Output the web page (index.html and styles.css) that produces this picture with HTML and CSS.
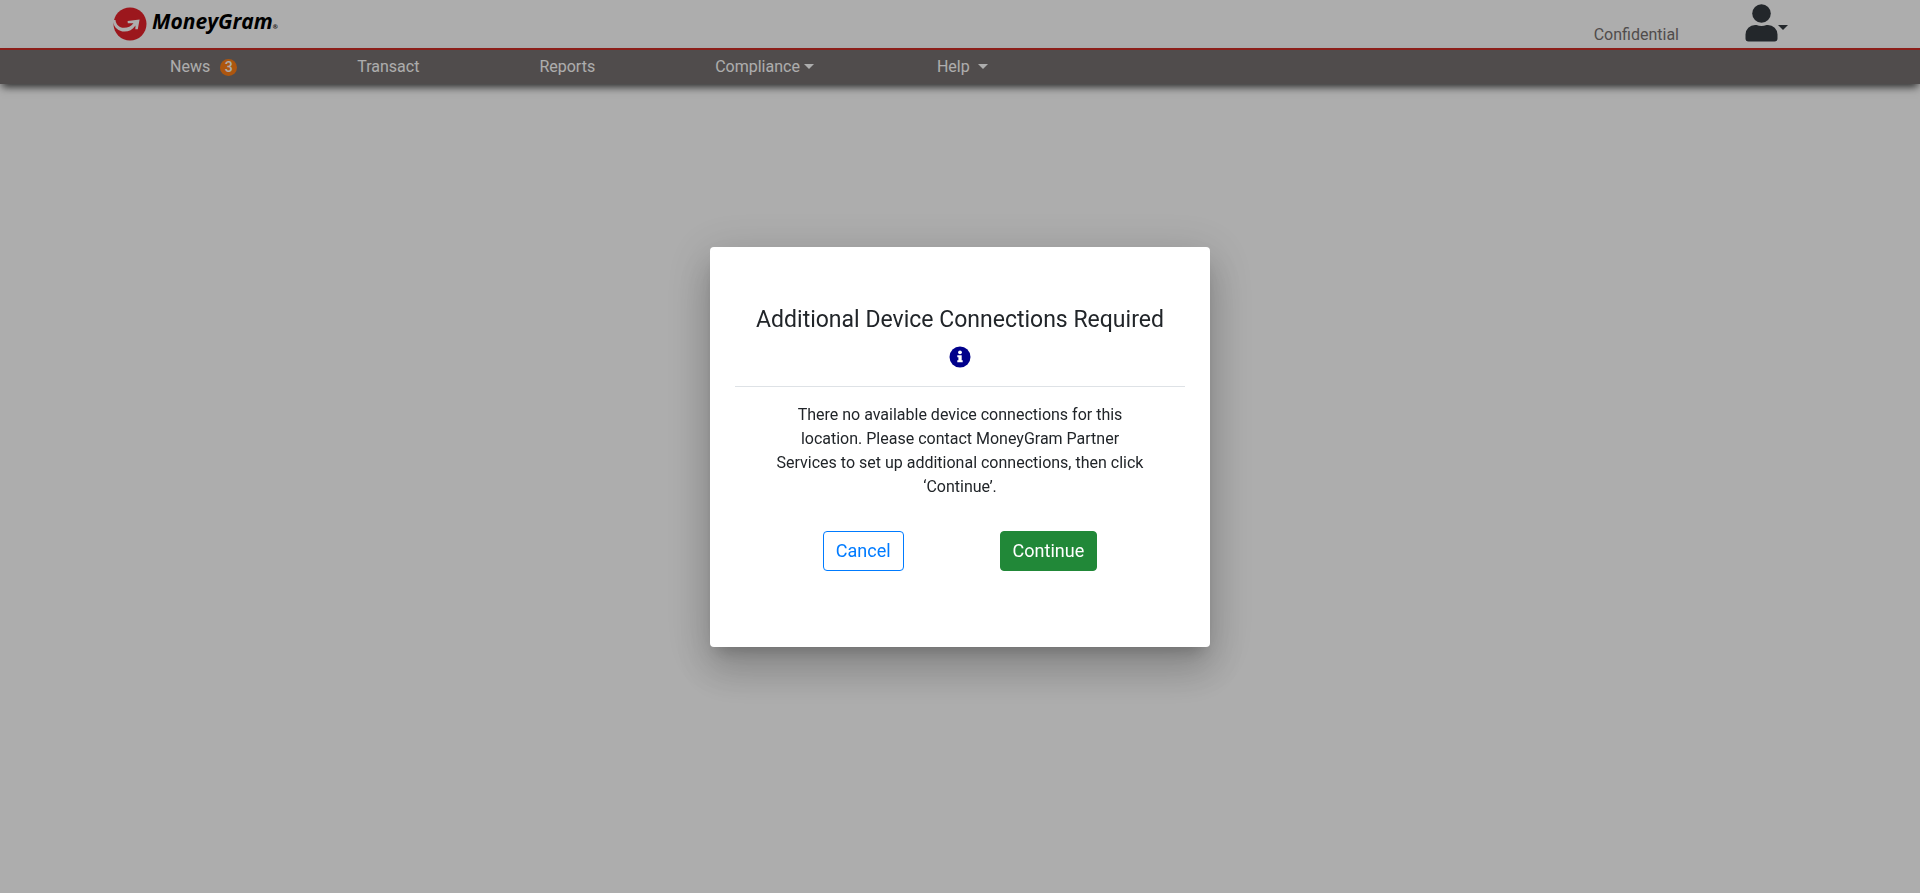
FILE: index.html
```html
<!DOCTYPE html>
<html lang="en">
<head>
<meta charset="utf-8">
<title>MoneyGram</title>
<link rel="stylesheet" href="styles.css">
</head>
<body>
<header class="page-header">
  <div class="topbar">
    <a class="brand" href="#">
      <svg class="brand-mark" viewBox="0 0 34 34" aria-hidden="true">
        <circle cx="17" cy="17" r="16.500" fill="#e6222b"/>
        <path d="M0 13 L2.500 13 C3 17.500 6 20.800 11 20.800 C15 20.800 18 19.500 20.500 16.200 L14.800 16.200 L14.600 13.900 L26.600 12.500 L24.800 22.300 L22.300 22.300 L22.500 18.400 C19.500 22.600 16 24.600 11.500 24.600 C5.500 24.600 1 20.500 0 15 Z" fill="#fff"/>
      </svg>
      <span class="brand-name">MoneyGram<span class="brand-reg">®</span></span>
    </a>
    <div class="account">
      <span class="confidential">Confidential</span>
      <button class="user-menu" type="button" aria-label="Account">
        <svg class="user-icon" viewBox="0 0 32 38" aria-hidden="true">
          <circle cx="16" cy="9.500" r="9.300"/>
          <path d="M9.600 21 H11 Q16 23 21 21 H22.400 A9.600 9.600 0 0 1 32 30.600 V34.500 A3 3 0 0 1 29 37.500 H3 A3 3 0 0 1 0 34.500 V30.600 A9.600 9.600 0 0 1 9.600 21 Z"/>
        </svg>
        <span class="caret"></span>
      </button>
    </div>
  </div>
  <nav class="main-nav">
    <a class="nav-link nav-link-news" href="#">News <span class="badge">3</span></a>
    <a class="nav-link" href="#">Transact</a>
    <a class="nav-link" href="#">Reports</a>
    <button class="nav-link nav-link-tight" type="button">Compliance<span class="caret"></span></button>
    <button class="nav-link" type="button">Help<span class="caret"></span></button>
  </nav>
</header>
<div class="backdrop">
  <div class="dialog" role="dialog" aria-modal="true" aria-labelledby="dialog-title">
    <div class="dialog-head">
      <h1 class="dialog-title" id="dialog-title">Additional Device Connections Required</h1>
      <svg class="info-icon" viewBox="0 0 22 22" role="img" aria-label="Information">
        <circle cx="11" cy="11" r="10.500" fill="#00008b"/>
        <circle cx="11" cy="6.300" r="1.900" fill="#fff"/>
        <path d="M8.300 9.200 H12.700 V14.200 H13.700 V16.300 H8.300 V14.200 H9.400 V11.300 H8.300 Z" fill="#fff"/>
      </svg>
    </div>
    <p class="dialog-text">There no available device connections for this location. Please contact MoneyGram Partner Services to set up additional connections, then click ‘Continue’.</p>
    <div class="dialog-actions">
      <button class="btn btn-cancel" type="button">Cancel</button>
      <button class="btn btn-continue" type="button">Continue</button>
    </div>
  </div>
</div>
</body>
</html>
```
FILE: styles.css
```css
* { box-sizing: border-box; }

body {
  min-height: 100vh;
  margin: 0;
  background: #fff;
  color: #212529;
  font-family: Roboto, "Liberation Sans", sans-serif;
  font-size: 16px;
  line-height: 24px;
}

button { font: inherit; cursor: pointer; }

.topbar {
  display: flex;
  justify-content: space-between;
  height: 50px;
  padding: 0 132px 0 113px;
  border-bottom: 2px solid #d12d26;
}

.brand {
  display: flex;
  align-items: center;
  gap: 5px;
  color: #000;
  text-decoration: none;
}
.brand-mark { width: 34px; height: 34px; }
.brand-name {
  font-family: "Open Sans", sans-serif;
  font-size: 21px;
  font-weight: 700;
  font-style: italic;
}
.brand-reg { font-size: 6px; }

.account { display: flex; gap: 66px; }
.confidential { align-self: flex-end; color: #777170; line-height: 26px; }
.user-menu {
  display: flex;
  align-items: center;
  padding: 0 0 2px;
  border: 0;
  background: none;
  color: #343a40;
}
.user-icon { width: 33px; height: 38px; fill: currentColor; }

.caret {
  border: 5px solid transparent;
  border-top-color: currentColor;
  border-bottom: 0;
}
.user-menu .caret { margin-top: 8px; }

.main-nav {
  display: flex;
  gap: 120px;
  height: 34px;
  padding-left: 170px;
  background: #777170;
  box-shadow: 0 5px 8px -2px #444;
}
.nav-link {
  display: flex;
  align-items: center;
  gap: 8px;
  padding: 0;
  border: 0;
  background: none;
  color: #fff;
  text-decoration: none;
}
.nav-link-news { gap: 10px; }
.nav-link-tight { gap: 4px; padding-right: 3px; }
.nav-link .caret { margin-bottom: 1px; }
.badge {
  width: 17px;
  border-radius: 9px;
  background: #ff7f17;
  font-size: 14px;
  font-weight: 500;
  line-height: 17px;
  text-align: center;
}

.backdrop {
  position: fixed;
  inset: 0;
  display: flex;
  align-items: center;
  justify-content: center;
  padding-top: 1px;
  background: rgba(0, 0, 0, .32);
}
.dialog {
  width: 500px;
  padding: 57px 25px 76px;
  border-radius: 4px;
  background: #fff;
  text-align: center;
  box-shadow: 0 11px 15px -7px rgba(0, 0, 0, .2), 0 24px 38px 3px rgba(0, 0, 0, .14), 0 9px 46px 8px rgba(0, 0, 0, .12);
}
.dialog-head {
  display: flex;
  flex-direction: column;
  align-items: center;
  gap: 10px;
  padding-bottom: 18px;
  border-bottom: 1px solid #dee2e6;
}
.dialog-title {
  margin: 0;
  font-size: 23px;
  font-weight: 400;
  line-height: 32px;
}
.info-icon { width: 22px; height: 22px; }
.dialog-text { margin: 16px 40px 32px; }
.dialog-actions { display: flex; justify-content: center; gap: 96px; }
.btn {
  height: 40px;
  padding: 0 12px;
  border: 1px solid;
  border-radius: 4px;
  font-size: 18px;
}
.btn-cancel { border-color: #007bff; background: #fff; color: #007bff; }
.btn-continue { border-color: #218838; background: #218838; color: #fff; }
```
